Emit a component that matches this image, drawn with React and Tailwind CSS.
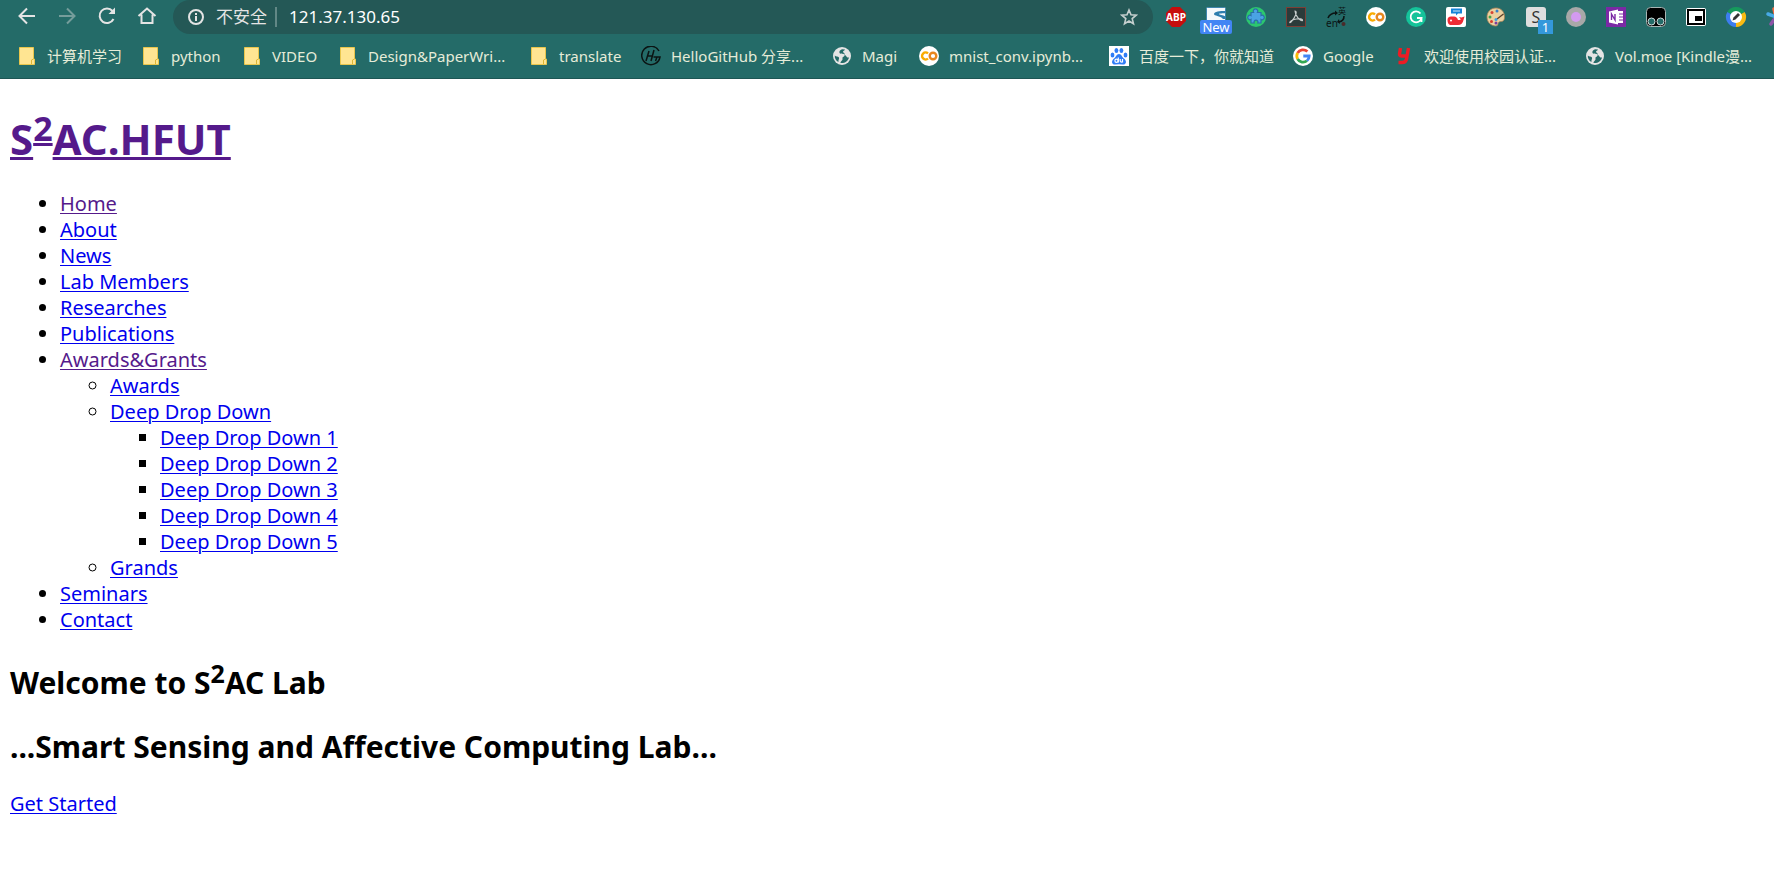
// src/App.jsx
import React from 'react';

const Globe = () => (
    <svg width="18" height="18" viewBox="0 0 18 18" aria-hidden="true">
        <circle cx="9" cy="9" r="9" fill="#e4e4e4" />
        <path d="M9 2.200 C7 3 6 4 6.500 6 C8 7.500 11 6 11.500 8 C12 10 9 9.500 9.500 11.500 C10 13.500 7.500 14 7.500 16 C12 16.500 15 14 16 10.500 C13 11 14 8.500 11.500 8 C12.500 6 10 6 10 4.500 C10.500 3.500 12 3.500 12 2.500 Z M1.800 8.500 C3 10 5 9 6 10.500 C6.500 12 5 13 5.500 15 C3 14 1.500 11 1.800 8.500 Z" fill="#246b68" />
    </svg>
);

const Folder = () => (
    <svg width="16" height="18" viewBox="0 0 16 18" aria-hidden="true">
        <path d="M.5 .5 H14.500 V12 H15.500 V17.500 H.5 Z" fill="#ffe592" stroke="#e9c64c" />
        <path d="M12.500 17 V13 L14.500 12" fill="none" stroke="#dcb535" />
    </svg>
);

const Colab = () => (
    <svg width="20" height="20" viewBox="0 0 20 20" aria-hidden="true">
        <circle cx="10" cy="10" r="10" fill="#fff" />
        <circle cx="14" cy="10" r="3.300" fill="none" stroke="#e8871e" strokeWidth="2.400" />
        <path d="M9 7.500 A3.500 3.500 0 1 0 9 12.500" fill="none" stroke="#f9ab00" strokeWidth="2.400" />
    </svg>
);

const HelloGitHub = () => (
    <svg width="20" height="20" viewBox="0 0 20 20" fill="none" stroke="#0b1413" strokeWidth="1.500" aria-hidden="true">
        <path d="M18 5 A9.200 9.200 0 1 0 19 11 H12.500 M8 5 L5 15 M13 4 L10 15 M6 10 H12 M16 11 L14.500 15" />
    </svg>
);

const Baidu = () => (
    <svg width="20" height="20" viewBox="0 0 20 20" aria-hidden="true">
        <rect width="20" height="20" fill="#fff" />
        <g fill="#2f7df6">
            <ellipse cx="3.500" cy="9" rx="1.900" ry="2.500" />
            <ellipse cx="7.400" cy="4.500" rx="1.900" ry="2.600" />
            <ellipse cx="12.400" cy="4.500" rx="1.900" ry="2.600" />
            <ellipse cx="16.500" cy="9" rx="1.900" ry="2.500" />
            <path d="M10 8 C7.500 8 7 11 5 12.500 C1.500 15.500 3 19 6.500 18.500 Q10 18 13.500 18.500 C17 19 18.500 15.500 15 12.500 C13 11 12.500 8 10 8 Z" />
        </g>
        <g fill="none" stroke="#fff" strokeWidth="1.200">
            <circle cx="7.500" cy="14.800" r="1.600" />
            <path d="M9.300 11.500 V16.500 M11.200 13 V15.200 Q11.400 16.300 13.500 16 V13" />
        </g>
    </svg>
);

const Google = () => (
    <svg width="20" height="20" viewBox="0 0 20 20" aria-hidden="true">
        <circle cx="10" cy="10" r="10" fill="#fff" />
        <g fill="none" strokeWidth="2.800">
            <path d="M14.400 5.600 A6.200 6.200 0 0 0 4.600 7" stroke="#ea4335" />
            <path d="M4.600 7 A6.200 6.200 0 0 0 4.600 13" stroke="#fbbc05" />
            <path d="M4.600 13 A6.200 6.200 0 0 0 14 14.700" stroke="#34a853" />
            <path d="M14 14.700 A6.200 6.200 0 0 0 16.200 10 H10.300" stroke="#4285f4" />
        </g>
    </svg>
);

const RedY = () => (
    <svg width="14" height="18" viewBox="0 0 14 18" fill="none" stroke="#ec1c24" strokeWidth="3.400" aria-hidden="true">
        <path d="M3.500 1 L2.500 7 Q2.500 9 5 9 H10 M11.500 1 L9.500 12 Q9 15.500 5 15.500 H1.500" />
    </svg>
);

const bookmarks = [
    { name: '计算机学习', icon: <Folder />, width: 'w-[124px]' },
    { name: 'python', icon: <Folder />, width: 'w-[101px]' },
    { name: 'VIDEO', icon: <Folder />, width: 'w-24' },
    { name: 'Design&PaperWri...', icon: <Folder />, width: 'w-[191px]' },
    { name: 'translate', icon: <Folder />, width: 'w-28' },
    { name: 'HelloGitHub 分享...', icon: <HelloGitHub />, width: 'w-[191px]' },
    { name: 'Magi', icon: <Globe />, width: 'w-[87px]' },
    { name: 'mnist_conv.ipynb...', icon: <Colab />, width: 'w-[190px]' },
    { name: '百度一下，你就知道', icon: <Baidu />, width: 'w-[184px]' },
    { name: 'Google', icon: <Google />, width: 'w-[101px]' },
    { name: '欢迎使用校园认证...', icon: <RedY />, width: 'w-[191px]' },
    { name: 'Vol.moe [Kindle漫...', icon: <Globe />, width: 'w-[191px]' },
];

// Extension buttons at the right end of the toolbar
const extensions = [
    {
        name: 'ABP',
        icon: (
            <>
                <path d="M6 0 H14 L20 6 V14 L14 20 H6 L0 14 V6 Z" fill="#c70d0d" />
                <text x="10" y="13.500" textAnchor="middle" fontSize="10" fontWeight="700" fill="#fff">ABP</text>
            </>
        ),
    },
    {
        name: 'New',
        badge: 'New',
        icon: (
            <>
                <rect x=".5" y=".5" width="19" height="19" rx="1" fill="#f5f9fb" stroke="#3f86ad" />
                <path d="M19.500 4 C14 4 8 4.500 8 7 C8 9 14 8.500 17 12 H19.500 V9.500 C17 8 13 7.800 13 7 C13 6.200 17 6.500 19.500 6 Z" fill="#2e7eae" />
            </>
        ),
    },
    {
        name: 'Puzzle',
        icon: (
            <>
                <circle cx="10" cy="10" r="10" fill="#2cc76f" />
                <g fill="#4aa3e3" stroke="#2a6fa8" strokeWidth="1.200">
                    <path d="M5 5.500 H7.600 A2.300 2.300 0 1 1 11.400 5.500 H15 V8.600 A2.200 2.200 0 1 1 15 12.400 V16 H11.800 A2 2 0 1 0 8.200 16 H5 V12.400 A2.200 2.200 0 1 1 5 8.600 Z" />
                </g>
            </>
        ),
    },
    {
        name: 'Acrobat',
        icon: (
            <>
                <rect x=".5" y=".5" width="19" height="19" fill="#2b3b3a" stroke="#7c3f36" />
                <path d="M9 4 C12 4 9 11 5 15 C3 17 3 14 8 12.500 C13 11 17 12 16.500 13.500 C15 15 9 9 9 4 Z" fill="none" stroke="#c9cfce" strokeWidth="1.100" />
            </>
        ),
    },
    {
        name: 'Translate',
        icon: (
            <>
                <text x="12" y="7" fontSize="8" fill="#0b1413">英</text>
                <text x="0" y="20" fontSize="10" fill="#0b1413">en</text>
                <path d="M2 11 Q4 6 10 6 M18 9 Q18 14 13 15" fill="none" stroke="#0b1413" strokeWidth="1.600" />
                <path d="M9 3.500 L12 6 L9 8.500 Z M13 12 L11 15 L14 17 Z" fill="#0b1413" />
                <circle cx="17.500" cy="17" r="2" fill="#4b2a2a" />
            </>
        ),
    },
    {
        name: 'Colab',
        icon: <Colab />,
    },
    {
        name: 'Grammarly',
        icon: (
            <>
                <circle cx="10" cy="10" r="10" fill="#15c39a" />
                <path d="M14.500 6.500 A5.500 5.500 0 1 0 15.500 11 H11 M15.500 11 V15" fill="none" stroke="#fff" strokeWidth="1.800" />
            </>
        ),
    },
    {
        name: 'Whale',
        icon: (
            <>
                <rect width="20" height="20" rx="2" fill="#fff" />
                <path d="M5 1.500 H16 V6.500 H12 L10 8.500 V6.500 H5 Z" fill="#1684d8" />
                <path d="M7 4 H14" stroke="#fff" strokeWidth=".8" />
                <path d="M1.500 13 Q1.500 9.500 5 9.500 H8 Q11 9.500 12 13 H14.500 Q15 12 13 10 L15.500 10.500 L18.500 9.500 L17.500 13 Q16.500 18 12 18 H4 Q1.500 17 1.500 13 Z" fill="#ee2b35" />
                <circle cx="5" cy="13.500" r="1" fill="#fff" />
            </>
        ),
    },
    {
        name: 'Palette',
        icon: (
            <>
                <path d="M10 1 C4.500 1 1 5 1 10 C1 15.500 5 19 10 19 C12.500 19 11.500 16 13 15 C15 14 18.500 15.500 18.500 10 C18.500 4.500 15 1 10 1 Z" fill="#ecd0a0" stroke="#a98355" strokeWidth=".8" />
                <circle cx="6" cy="5.500" r="1.500" fill="#d74334" />
                <circle cx="11" cy="4" r="1.500" fill="#367fc9" />
                <circle cx="4" cy="10" r="1.500" fill="#42a34c" />
                <circle cx="5.500" cy="14.500" r="1.500" fill="#d7402f" />
                <circle cx="10" cy="16" r="1.500" fill="#7a3e9d" />
                <path d="M17.500 7 L11 12" stroke="#5b3f2a" strokeWidth="1.300" />
                <circle cx="10" cy="12.500" r="1.500" fill="#3e9ee0" />
            </>
        ),
    },
    {
        name: 'S',
        count: '1',
        icon: (
            <>
                <rect width="20" height="20" rx="3" fill="#dedede" />
                <text x="10" y="15.500" textAnchor="middle" fontSize="16" fill="#333">S</text>
            </>
        ),
    },
    {
        name: 'Recorder',
        icon: (
            <>
                <circle cx="10" cy="10" r="10" fill="#a8a8a8" />
                <circle cx="10" cy="10" r="5" fill="#d49af0" />
            </>
        ),
    },
    {
        name: 'OneNote',
        icon: (
            <>
                <rect width="20" height="20" fill="#7b29a5" />
                <path d="M11 4 H17 V16 H11 Z" fill="#fff" />
                <path d="M13 7 H17 M13 10 H17 M13 13 H17" stroke="#7b29a5" />
                <path d="M3 4.500 L12 2.500 V17.500 L3 15.500 Z" fill="#fff" />
                <path d="M5.500 13 V7 L9 13 V7" fill="none" stroke="#7b29a5" strokeWidth="1.400" />
            </>
        ),
    },
    {
        name: 'Tampermonkey',
        icon: (
            <>
                <rect x=".5" y=".5" width="19" height="19" rx="4" fill="#000" stroke="#a8b5b4" />
                <circle cx="5.500" cy="14.500" r="3.500" fill="#246b68" stroke="#d5dddd" />
                <circle cx="14.500" cy="14.500" r="3.500" fill="#246b68" stroke="#d5dddd" />
            </>
        ),
    },
    {
        name: 'Picture in picture',
        icon: (
            <>
                <rect y="1" width="20" height="18" rx="2" fill="#fff" />
                <rect x="2" y="3" width="16" height="14" fill="#fff" stroke="#000" strokeWidth="2" />
                <rect x="9" y="9" width="7" height="5" fill="#000" />
            </>
        ),
    },
    {
        name: 'Pen',
        icon: (
            <>
                <path d="M1.300 5 A10 10 0 0 1 18.700 5 L10 10 Z" fill="#159a5c" />
                <path d="M18.700 5 A10 10 0 0 1 10 20 V10 Z" fill="#fabb12" />
                <path d="M10 20 A10 10 0 0 1 1.300 5 L10 10 Z" fill="#3d7df0" />
                <circle cx="10" cy="10" r="6" fill="#fff" />
                <path d="M6.500 13.500 L7.500 10.500 L12 6 L14 8 L9.500 12.500 Z" fill="#333" />
            </>
        ),
    },
];

const navItems = [
    { name: 'Home', visited: true },
    { name: 'About' },
    { name: 'News' },
    { name: 'Lab Members' },
    { name: 'Researches' },
    { name: 'Publications' },
    {
        name: 'Awards&Grants',
        visited: true,
        children: [
            { name: 'Awards' },
            {
                name: 'Deep Drop Down',
                children: [
                    { name: 'Deep Drop Down 1' },
                    { name: 'Deep Drop Down 2' },
                    { name: 'Deep Drop Down 3' },
                    { name: 'Deep Drop Down 4' },
                    { name: 'Deep Drop Down 5' },
                ],
            },
            { name: 'Grands' },
        ],
    },
    { name: 'Seminars' },
    { name: 'Contact' },
];

const listStyles = ['list-disc', 'list-[circle]', 'list-[square]'];

const NavList = ({ items, level = 0 }) => (
    <ul className={`pl-[50px] ${listStyles[level]}`}>
        {items.map((item) => (
            <li key={item.name}>
                <a href="#" className={`underline decoration-1 underline-offset-2 ${item.visited ? 'text-[#551a8b]' : 'text-[#0000ee]'}`}>
                    {item.name}
                </a>
                {item.children && <NavList items={item.children} level={level + 1} />}
            </li>
        ))}
    </ul>
);

const Toolbar = () => (
    <div className="flex h-[34px] items-start overflow-hidden">
        <div className="flex h-8 shrink-0 items-center gap-5 pl-[17px]">
            <button aria-label="Back">
                <svg width="20" height="20" viewBox="0 0 20 20" fill="none" stroke="#e4e4e4" strokeWidth="2">
                    <path d="M18 10 H3 M10 2.500 L2.500 10 L10 17.500" />
                </svg>
            </button>
            <button aria-label="Forward">
                <svg width="20" height="20" viewBox="0 0 20 20" fill="none" stroke="#759d9b" strokeWidth="2">
                    <path d="M2 10 H17 M10 2.500 L17.500 10 L10 17.500" />
                </svg>
            </button>
            <button aria-label="Reload">
                <svg width="20" height="20" viewBox="0 0 20 20" fill="none" stroke="#e4e4e4" strokeWidth="2">
                    <path d="M16.500 13 A7.300 7.300 0 1 1 15.500 5" />
                    <path d="M18 1.500 V8 H11.500 Z" fill="#e4e4e4" stroke="none" />
                </svg>
            </button>
            <button aria-label="Home">
                <svg width="20" height="20" viewBox="0 0 20 20" fill="none" stroke="#e4e4e4" strokeWidth="2">
                    <path d="M1.500 10 L10 2.500 L18.500 10 M4.500 8.500 V17 H15.500 V8.500" />
                </svg>
            </button>
        </div>

        {/* Address bar */}
        <div className="ml-4 flex h-[34px] min-w-0 flex-1 items-center rounded-full bg-[#245856] px-[15px]">
            <svg className="shrink-0" width="16" height="16" viewBox="0 0 16 16" fill="none" stroke="#e4e4e4" strokeWidth="2" aria-hidden="true">
                <circle cx="8" cy="8" r="7" />
                <path d="M8 7 V12 M8 4 V6" />
            </svg>
            <span className="ml-3 shrink-0 text-[17px] text-[#e4e4e4]">不安全</span>
            <span className="mx-2 h-5 w-0.5 shrink-0 bg-[#628886]"></span>
            <input
                type="text"
                aria-label="Address"
                defaultValue="121.37.130.65"
                className="min-w-0 flex-1 bg-transparent pl-1 text-[17px] text-white outline-none"
            />
            <button aria-label="Bookmark this page">
                <svg width="18" height="18" viewBox="0 0 18 18" fill="none" stroke="#c5cfce" strokeWidth="1.600">
                    <path d="M9 2 L11 6.800 L16.200 7.200 L12.200 10.600 L13.500 15.800 L9 13 L4.500 15.800 L5.800 10.600 L1.800 7.200 L7 6.800 Z" />
                </svg>
            </button>
        </div>

        {/* Extensions */}
        <div className="ml-[13px] flex h-[33px] shrink-0 items-center gap-5">
            {extensions.map((ext) => (
                <button key={ext.name} aria-label={ext.name} className="relative">
                    <svg width="20" height="20" viewBox="0 0 20 20" className="overflow-visible">{ext.icon}</svg>
                    {ext.badge && (
                        <span className="absolute top-[13px] -left-1.5 w-8 rounded-xs bg-[#4285f4] text-center text-[13px] leading-[14px] text-white">
                            {ext.badge}
                        </span>
                    )}
                    {ext.count && (
                        <span className="absolute top-[13px] left-3 w-[15px] bg-[#3498db] text-center text-[13px] leading-[14px] text-white">
                            {ext.count}
                        </span>
                    )}
                </button>
            ))}
            <button aria-label="More extensions" className="w-2 overflow-hidden">
                <svg width="20" height="20" viewBox="0 0 20 20" fill="none" strokeWidth="3.500" strokeLinecap="round">
                    <path d="M10 10 L8 2" stroke="#f26b43" />
                    <path d="M10 10 L5 17" stroke="#8d55a8" />
                    <path d="M10 10 L2 7" stroke="#48a9e6" />
                </svg>
            </button>
        </div>
    </div>
);

const App = () => {
    return (
        <div className="min-h-screen bg-white font-['Noto_Sans','Noto_Sans_CJK_SC',sans-serif] text-black">
            <header className="border-b border-[#1d5654] bg-[#246b68]">
                <Toolbar />
                <nav className="flex h-11 items-center overflow-hidden pl-[17px] text-[15px] text-[#e6ecd8]">
                    {bookmarks.map((mark) => (
                        <a key={mark.name} href="#" className={`flex shrink-0 items-center gap-2.5 whitespace-nowrap ${mark.width}`}>
                            <span className="flex w-5 justify-center">{mark.icon}</span>
                            <span>{mark.name}</span>
                        </a>
                    ))}
                </nav>
            </header>

            <main className="px-[10px] text-[20px] leading-[26px]">
                <h1 className="pt-[30px] text-[42px] leading-[60px] font-bold">
                    <a href="#" className="text-[#551a8b] underline decoration-3 underline-offset-2">
                        S<sup className="-top-[14px] inline-block text-[34px] leading-none underline decoration-3 underline-offset-2">2</sup>AC.HFUT
                    </a>
                </h1>

                <div className="pt-[22px]">
                    <NavList items={navItems} />
                </div>

                <h2 className="pt-[30px] text-[30px] leading-10 font-bold">
                    Welcome to S<sup className="-top-[11px] text-[25px]">2</sup>AC Lab
                </h2>
                <h2 className="pt-6 text-[30px] leading-10 font-bold">...Smart Sensing and Affective Computing Lab...</h2>
                <a href="#" className="mt-6 inline-block text-[#0000ee] underline decoration-1 underline-offset-2">Get Started</a>
            </main>
        </div>
    );
};

export default App;
